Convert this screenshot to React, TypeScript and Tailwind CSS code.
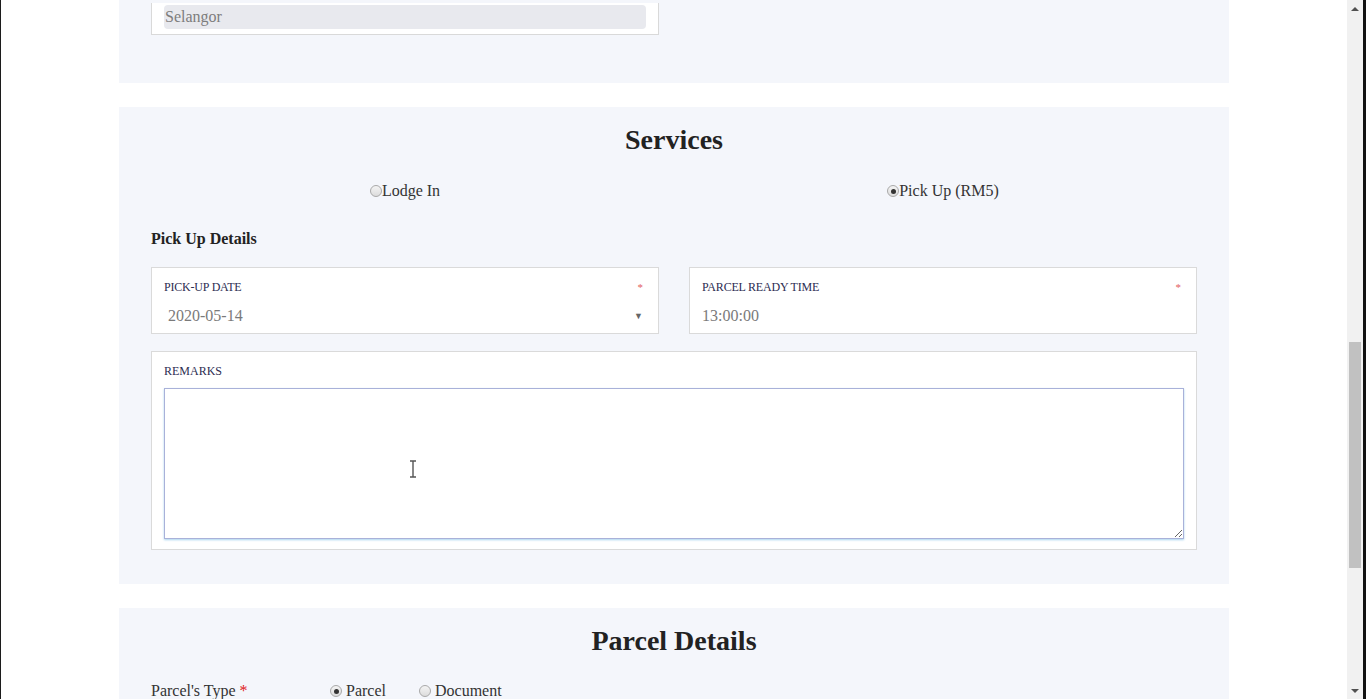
import React from "react";

function Radio({ checked }: { checked?: boolean }) {
  return (
    <span className="inline-flex h-[12px] w-[12px] shrink-0 items-center justify-center rounded-full border border-[#a9a9a9] bg-gradient-to-b from-[#f4f4f4] to-[#dcdcdc]">
      {checked && <span className="h-[5px] w-[5px] rounded-full bg-[#333]" />}
    </span>
  );
}

function Field({
  label,
  value,
  dropdown,
  indent,
}: {
  label: string;
  value: string;
  dropdown?: boolean;
  indent?: boolean;
}) {
  return (
    <div className="border border-[#dadada] bg-white pl-3 pr-[15px] pt-3 pb-[5px]">
      <div className="flex items-center justify-between text-[12px] leading-[14px] text-[#2d2d52]">
        <span className="tracking-[-0.2px]">{label}</span>
        <span className="text-[11px] text-[#e25c5c]">*</span>
      </div>
      <div
        className={
          "mt-[10px] flex items-center justify-between text-[16px] leading-[24px] text-[#7a7a7a] " +
          (indent ? "pl-1" : "")
        }
      >
        <span>{value}</span>
        {dropdown && <span className="text-[9px] text-[#666]">▼</span>}
      </div>
    </div>
  );
}

export default function App() {
  return (
    <div className="flex h-[699px] w-[1366px] overflow-hidden bg-white font-['Liberation_Serif','Times_New_Roman',serif] text-[#222]">
      <div className="w-px bg-[#1c1c1c]" />

      <div className="relative flex flex-1 flex-col">
        <div className="h-px bg-[#e2e2e2]" />

        <div className="mx-auto flex w-[1110px] flex-col gap-6">
          {/* tail of the address section */}
          <section className="flex h-[83px] flex-col justify-end bg-[#f4f6fb] px-8 pb-[48px]">
            <div className="grid grid-cols-2 gap-[30px]">
              <div className="border border-t-0 border-[#d9d9d9] bg-white px-3 pb-[5px] pt-[2px]">
                <div className="h-[24px] rounded bg-[#e8e9ee] px-px text-[16px] leading-[24px] text-[#7d7d7d]">
                  Selangor
                </div>
              </div>
              <div />
            </div>
          </section>

          {/* services */}
          <section className="bg-[#f4f6fb] px-8 pb-[34px] pt-4">
            <h2 className="text-center text-[28px] font-bold leading-[34px] text-[#222]">
              Services
            </h2>

            <div className="mt-[25px] grid grid-cols-2 gap-[30px] text-[16px] leading-[18px] text-[#333]">
              <label className="flex items-center justify-center">
                <Radio />
                <span>Lodge In</span>
              </label>
              <label className="flex items-center justify-center">
                <Radio checked />
                <span>Pick Up (RM5)</span>
              </label>
            </div>

            <div className="mt-[30px] text-[16px] font-bold leading-[18px] text-[#222]">
              Pick Up Details
            </div>

            <div className="mt-[19px] grid grid-cols-2 gap-[30px]">
              <Field label="PICK-UP DATE" value="2020-05-14" dropdown indent />
              <Field label="PARCEL READY TIME" value="13:00:00" />
            </div>

            <div className="mt-[17px] border border-[#dadada] bg-white px-3 pb-[10px] pt-3">
              <div className="text-[12px] leading-[14px] text-[#2d2d52]">REMARKS</div>
              <textarea
                readOnly
                className="mt-[10px] block h-[151px] w-full resize-y border border-[#a9b1d9] bg-white shadow-[0_1px_2px_#a9d4ee] outline-none"
              />
            </div>
          </section>

          {/* parcel details */}
          <section className="h-[200px] bg-[#f4f6fb] px-8 pt-4">
            <h2 className="text-center text-[28px] font-bold leading-[34px] text-[#222]">
              Parcel Details
            </h2>
            <div className="mt-[24px] flex items-center text-[16px] leading-[18px] text-[#333]">
              <span className="w-[179px]">
                Parcel's Type <span className="text-[#e02020]">*</span>
              </span>
              <label className="flex items-center gap-[4px]">
                <Radio checked />
                <span>Parcel</span>
              </label>
              <label className="ml-[33px] flex items-center gap-[4px]">
                <Radio />
                <span>Document</span>
              </label>
            </div>
          </section>
        </div>

        {/* mouse text cursor */}
        <svg
          className="pointer-events-none absolute left-[407px] top-[460px]"
          width="10"
          height="18"
          viewBox="0 0 10 18"
        >
          <path d="M2 1h6M2 17h6M5 1v16" stroke="#555" strokeWidth="1.4" fill="none" />
        </svg>
      </div>

      {/* scrollbar */}
      <div className="flex w-[16px] flex-col items-center bg-[#f1f1f1]">
        <div className="flex h-[17px] items-center justify-center">
          <span className="h-0 w-0 border-x-[4px] border-b-[4px] border-x-transparent border-b-[#505050]" />
        </div>
        <div className="mt-[325px] h-[226px] w-[12px] bg-[#c1c1c1]" />
        <div className="flex-1" />
        <div className="flex h-[17px] items-center justify-center">
          <span className="h-0 w-0 border-x-[4px] border-t-[4px] border-x-transparent border-t-[#505050]" />
        </div>
      </div>
      <div className="w-[3px] bg-[#111]" />
    </div>
  );
}
